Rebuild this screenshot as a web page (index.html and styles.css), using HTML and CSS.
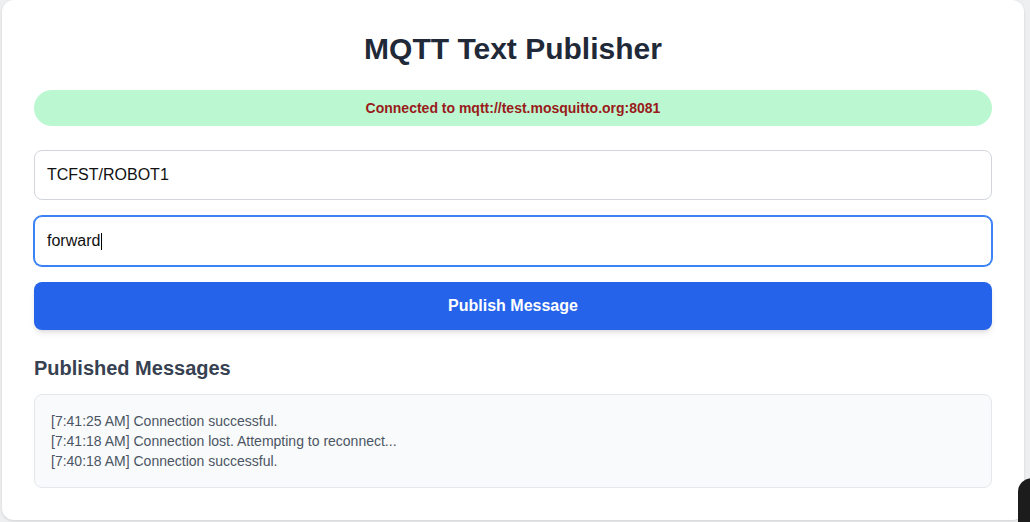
FILE: index.html
```html
<!DOCTYPE html>
<html lang="en">
<head>
<meta charset="utf-8">
<title>MQTT Text Publisher</title>
<link rel="stylesheet" href="styles.css">
</head>
<body>
<main class="card">
  <h1 class="title">MQTT Text Publisher</h1>
  <div class="status">Connected to mqtt://test.mosquitto.org:8081</div>
  <input class="field" type="text" value="TCFST/ROBOT1">
  <div class="field field-focused"><span>forward</span><span class="caret"></span></div>
  <button class="publish">Publish Message</button>
  <h2 class="subtitle">Published Messages</h2>
  <div class="log">
    <div>[7:41:25 AM] Connection successful.</div>
    <div>[7:41:18 AM] Connection lost. Attempting to reconnect...</div>
    <div>[7:40:18 AM] Connection successful.</div>
  </div>
</main>
<div class="corner-widget"></div>
</body>
</html>
```
FILE: styles.css
```css
* { box-sizing: border-box; }
html, body { margin: 0; padding: 0; }
body {
  background: #eeeff1;
  font-family: "Liberation Sans", Arial, sans-serif;
  width: 1030px;
  height: 522px;
  overflow: hidden;
  position: relative;
}
.card {
  margin: 0 0 0 2px;
  width: 1022px;
  height: 520px;
  background: #ffffff;
  border-radius: 12px;
  box-shadow: 0 1px 3px rgba(0,0,0,0.12);
  padding: 31px 32px 32px;
  display: flex;
  flex-direction: column;
}
.title {
  margin: 0 0 23px;
  font-size: 30px;
  line-height: 36px;
  font-weight: 700;
  text-align: center;
  color: #1f2937;
}
.status {
  height: 36px;
  border-radius: 18px;
  background: #bbf7d0;
  color: #991b1b;
  font-size: 14px;
  font-weight: 700;
  line-height: 36px;
  text-align: center;
  margin-bottom: 24px;
}
.field {
  display: flex;
  align-items: center;
  width: 100%;
  height: 50px;
  padding: 0 12px;
  border: 1px solid #d1d5db;
  border-radius: 8px;
  font-family: inherit;
  font-size: 16px;
  color: #111111;
  background: #fff;
  margin: 0 0 16px;
  outline: none;
}
.field-focused {
  border-color: #3b82f6;
  box-shadow: 0 0 0 1px #3b82f6;
}
.caret {
  display: inline-block;
  width: 1px;
  height: 17px;
  background: #000;
  margin-left: 1px;
}
.publish {
  height: 48px;
  width: 100%;
  border: none;
  border-radius: 8px;
  background: #2563eb;
  color: #fff;
  font-family: inherit;
  font-size: 16px;
  font-weight: 700;
  box-shadow: 0 4px 6px -1px rgba(0,0,0,0.1), 0 2px 4px -2px rgba(0,0,0,0.1);
  margin: 0 0 24px;
}
.subtitle {
  margin: 0 0 12px;
  font-size: 20px;
  line-height: 28px;
  font-weight: 700;
  color: #374151;
}
.log {
  background: #f9fafb;
  border: 1px solid #e5e7eb;
  border-radius: 8px;
  padding: 16px;
  font-size: 14px;
  line-height: 20px;
  color: #4b5563;
}
.corner-widget {
  position: absolute;
  left: 1018px;
  top: 478px;
  width: 30px;
  height: 60px;
  background: #1c1c1c;
  border-radius: 14px 0 0 0;
}
```
